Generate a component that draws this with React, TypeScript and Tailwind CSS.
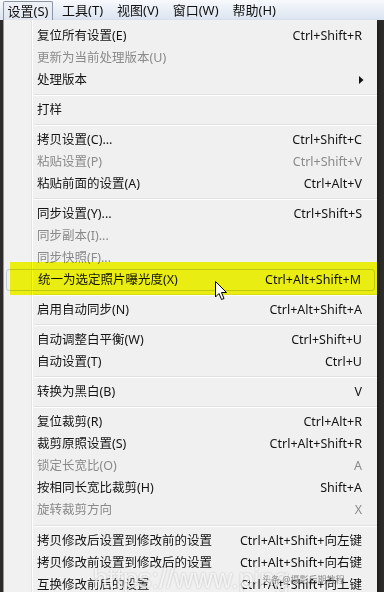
type Item =
  | 'sep'
  | { t: string; k?: string; d?: boolean; sub?: boolean; hot?: boolean };

const items: Item[] = [
  { t: '复位所有设置(E)', k: 'Ctrl+Shift+R' },
  { t: '更新为当前处理版本(U)', d: true },
  { t: '处理版本', sub: true },
  'sep',
  { t: '打样' },
  'sep',
  { t: '拷贝设置(C)...', k: 'Ctrl+Shift+C' },
  { t: '粘贴设置(P)', k: 'Ctrl+Shift+V', d: true },
  { t: '粘贴前面的设置(A)', k: 'Ctrl+Alt+V' },
  'sep',
  { t: '同步设置(Y)...', k: 'Ctrl+Shift+S' },
  { t: '同步副本(I)...', d: true },
  { t: '同步快照(F)...', d: true },
  { t: '统一为选定照片曝光度(X)', k: 'Ctrl+Alt+Shift+M', hot: true },
  'sep',
  { t: '启用自动同步(N)', k: 'Ctrl+Alt+Shift+A' },
  'sep',
  { t: '自动调整白平衡(W)', k: 'Ctrl+Shift+U' },
  { t: '自动设置(T)', k: 'Ctrl+U' },
  'sep',
  { t: '转换为黑白(B)', k: 'V' },
  'sep',
  { t: '复位裁剪(R)', k: 'Ctrl+Alt+R' },
  { t: '裁剪原照设置(S)', k: 'Ctrl+Alt+Shift+R' },
  { t: '锁定长宽比(O)', k: 'A', d: true },
  { t: '按相同长宽比裁剪(H)', k: 'Shift+A' },
  { t: '旋转裁剪方向', k: 'X', d: true },
  'sep',
  { t: '拷贝修改后设置到修改前的设置', k: 'Ctrl+Alt+Shift+向左键' },
  { t: '拷贝修改前设置到修改后的设置', k: 'Ctrl+Alt+Shift+向右键' },
  { t: '互换修改前后的设置', k: 'Ctrl+Alt+Shift+向上键' },
];

const menus = ['工具(T)', '视图(V)', '窗口(W)', '帮助(H)'];

export default function App() {
  return (
    <div
      className="relative w-[384px] h-[592px] overflow-hidden bg-[#2e2c2a] text-[#111]"
      style={{ fontFamily: '"Noto Sans", "Noto Sans CJK SC", sans-serif' }}
    >
      {/* menu bar */}
      <div className="flex h-[20px] items-end bg-gradient-to-b from-[#f7f9fc] to-[#dbe4f0] text-[13px] leading-none">
        <div className="ml-[3px] flex h-[19px] w-[50px] items-center justify-center rounded-t-[2px] border border-b-0 border-[#8a96a6] bg-gradient-to-b from-[#eef2f7] to-[#e2e8f0]">
          设置(S)
        </div>
        <div className="ml-[9px] flex h-[19px] items-center gap-[14px]">
          {menus.map((m) => (
            <span key={m}>{m}</span>
          ))}
        </div>
      </div>

      {/* dropdown */}
      <div className="ml-[3px] w-[374px] border-l border-[#979797] bg-[#f0f0f0] bg-[linear-gradient(to_right,#f1f1f1_27px,#e2e3e3_27px,#e2e3e3_28px,#ffffff_28px,#ffffff_29px,#f0f0f0_29px)] pt-[5px] text-[12.5px] shadow-[2px_2px_3px_rgba(0,0,0,0.4)]">
        {items.map((it, i) =>
          it === 'sep' ? (
            <div key={i} className={'flex items-center pl-[30px] ' + (i === 27 ? 'h-[9px]' : 'h-[8px]')}>
              <div className="h-[2px] w-full border-t border-b border-t-[#e0e0e0] border-b-white" />
            </div>
          ) : (
            <div
              key={i}
              className={
                'relative mx-[2px] flex h-[22px] items-center pl-[31px] pr-[13px] ' +
                (it.hot ? 'rounded-[3px] border border-[#c4ccd2] ' : '') +
                (it.d ? 'text-[#8a8a8a]' : 'text-[#141414]')
              }
            >
              <span className="flex-1 whitespace-nowrap">{it.t}</span>
              {it.k && <span className="whitespace-nowrap">{it.k}</span>}
              {it.sub && (
                <svg width="5" height="8" viewBox="0 0 5 8" className="mr-[-2px]">
                  <path d="M0 0 L4.5 4 L0 8 Z" fill="#111" />
                </svg>
              )}
            </div>
          )
        )}
      </div>

      {/* yellow highlighter */}
      <div className="pointer-events-none absolute left-[10px] top-[262px] h-[33px] w-[370px] bg-[#f8fc12] mix-blend-multiply" />

      {/* mouse cursor */}
      <svg className="absolute left-[215px] top-[281px]" width="13" height="20" viewBox="0 0 13 20">
        <path
          d="M0.5 0.5 L0.5 16 L4 12.5 L6.5 18.5 L9 17.5 L6.5 11.5 L11.5 11.5 Z"
          fill="#fff"
          stroke="#000"
          strokeWidth="1"
          strokeLinejoin="round"
        />
      </svg>

      {/* watermark */}
      <div
        className="pointer-events-none absolute left-[93px] top-[566px] whitespace-nowrap text-[27px] leading-none text-white/80 [text-shadow:0_0_2px_rgba(0,0,0,0.25)]"
        style={{ fontFamily: '"Liberation Sans", sans-serif' }}
      >
        https://www.ping
      </div>
      <div className="pointer-events-none absolute left-[262px] top-[575px] whitespace-nowrap text-[9px] leading-none text-[#6b6b6b]/80">
        头条 @摄影后期教程
      </div>
    </div>
  );
}
